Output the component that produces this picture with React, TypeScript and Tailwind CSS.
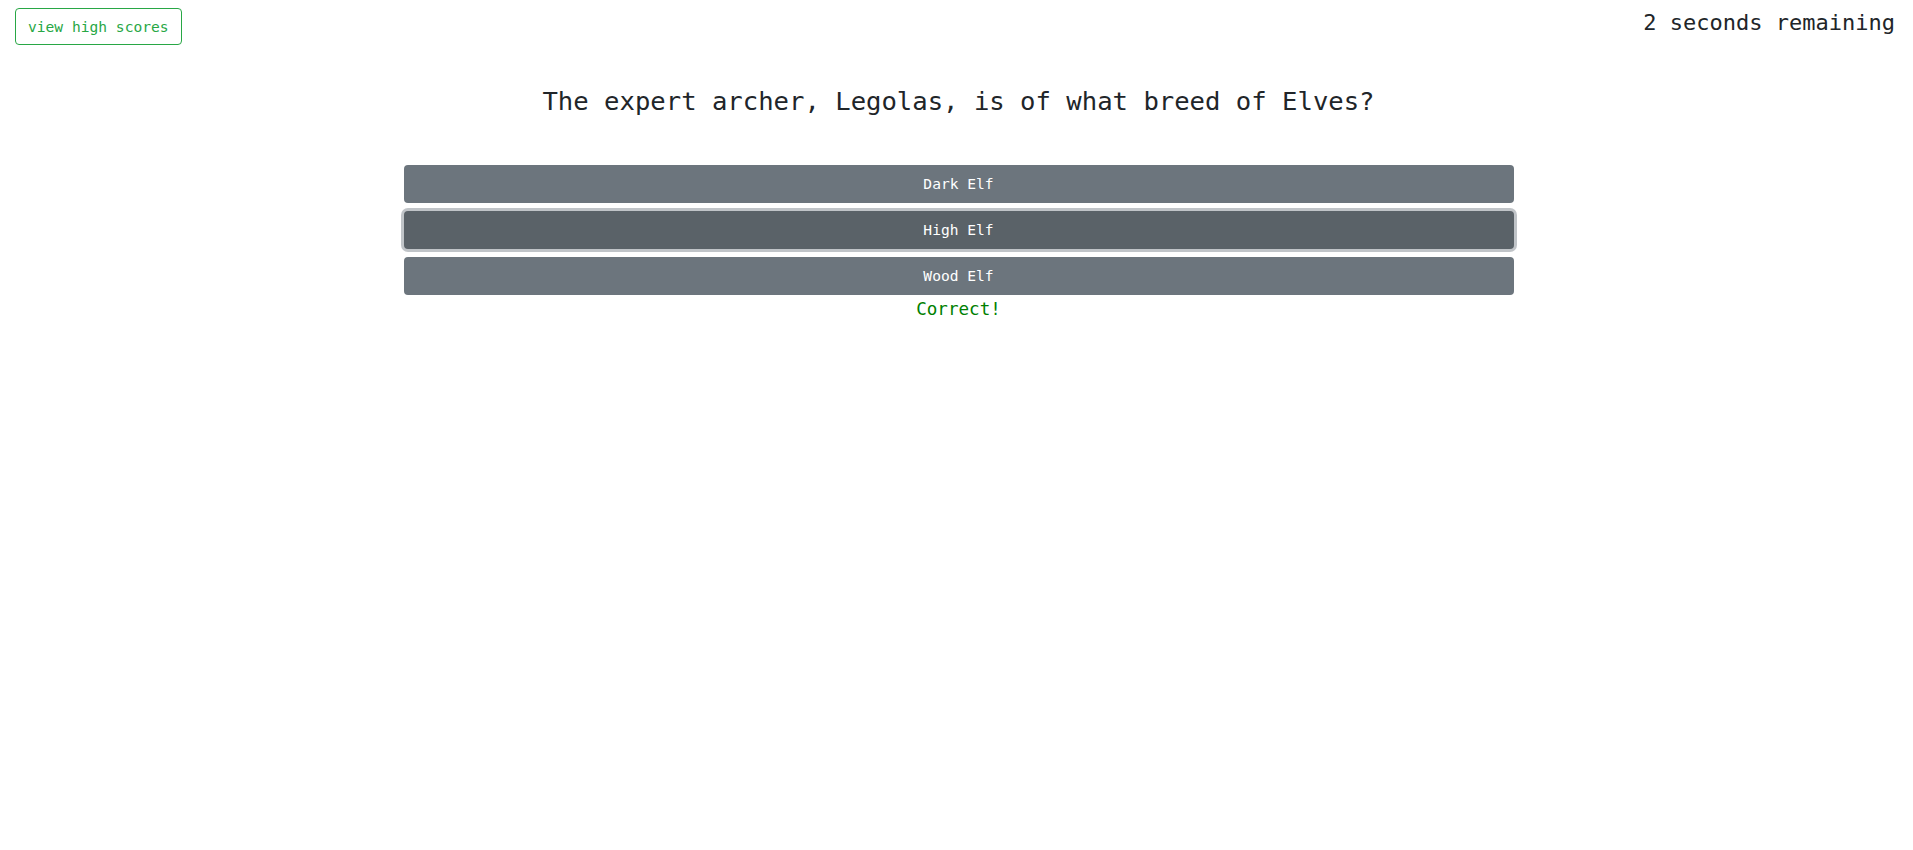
import { useState } from "react";

const answers = ["Dark Elf", "High Elf", "Wood Elf"];

function AnswerButton({ label, active }: { label: string; active: boolean }) {
  const base =
    "block w-full h-[38px] rounded-[4px] text-white text-[14.6px] leading-[38px] text-center";
  return (
    <button
      className={
        active
          ? `${base} bg-[#5a6268] shadow-[0_0_0_3px_rgba(130,138,145,0.5)]`
          : `${base} bg-[#6c757d]`
      }
    >
      {label}
    </button>
  );
}

export default function App() {
  const [picked] = useState("High Elf");

  return (
    <div className="min-h-screen bg-white text-[#212529] font-['DejaVu_Sans_Mono',monospace]">
      {/* top bar */}
      <div className="flex justify-between items-start pt-2 pl-[15px] pr-[18px]">
        <button className="h-[37px] px-[12px] border border-[#28a745] rounded-[4px] text-[#28a745] text-[14.6px] leading-[35px]">
          view high scores
        </button>
        <div className="text-[22px] leading-[30px] mt-0">2 seconds remaining</div>
      </div>

      <div className="pl-[4px]">
        {/* question */}
        <h1 className="mt-[41px] text-center text-[25.6px] leading-[31px]">
          The expert archer, Legolas, is of what breed of Elves?
        </h1>

        {/* answers */}
        <div className="w-[1110px] mx-auto mt-[48px] flex flex-col gap-2">
          {answers.map((a) => (
            <AnswerButton key={a} label={a} active={a === picked} />
          ))}
        </div>
        <div className="text-center text-[#008000] text-[17.6px] leading-[26px] mt-[1px]">
          Correct!
        </div>
      </div>
    </div>
  );
}
